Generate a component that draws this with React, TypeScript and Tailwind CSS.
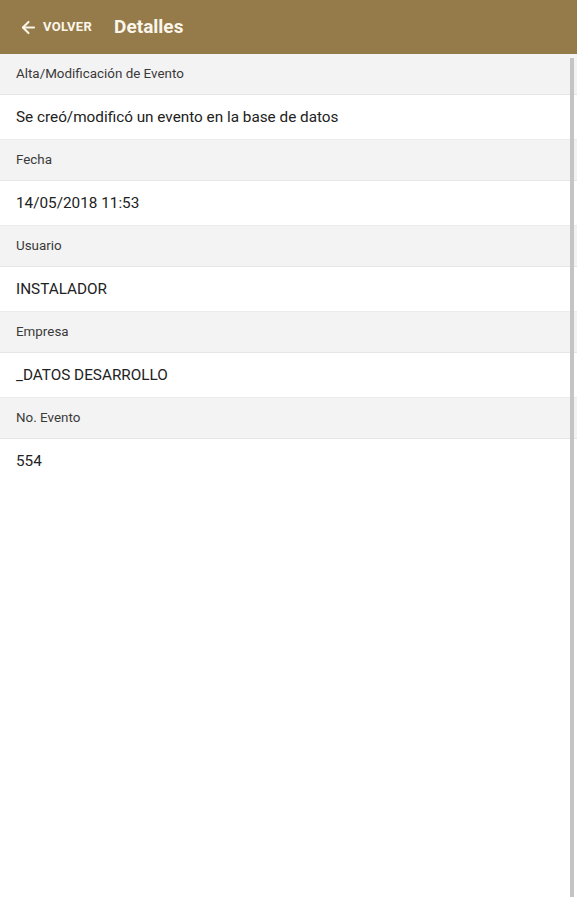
import { ArrowLeft } from "lucide-react";

const fields = [
  { label: "Alta/Modificación de Evento", value: "Se creó/modificó un evento en la base de datos" },
  { label: "Fecha", value: "14/05/2018 11:53" },
  { label: "Usuario", value: "INSTALADOR" },
  { label: "Empresa", value: "_DATOS DESARROLLO" },
  { label: "No. Evento", value: "554" },
];

export default function App() {
  return (
    <div className="relative h-[900px] w-[577px] overflow-hidden bg-white" style={{ fontFamily: "Roboto, 'Noto Sans', sans-serif" }}>
      {/* Toolbar */}
      <div className="flex h-[54px] items-center bg-[#957b4a] shadow-[0_1px_3px_rgba(0,0,0,0.3)]">
        <div className="ml-[19px] flex items-center text-[#fbf6ea]">
          <ArrowLeft size={19} strokeWidth={2.6} />
          <span className="ml-[5px] text-[13px] font-bold tracking-[0.3px]">VOLVER</span>
        </div>
        <span className="ml-[22px] text-[19px] font-bold text-[#fbf6ea]">Detalles</span>
      </div>

      {fields.map((f, i) => (
        <div key={f.label}>
          <div className="flex h-[41px] items-center border-b border-[#e6e6e6] bg-[#f3f3f3] px-4 text-[13.4px] text-[#3a3a3a]">
            {f.label}
          </div>
          <div
            className={`flex h-[45px] items-center bg-white px-4 text-[15.3px] text-[#222] ${
              i < fields.length - 1 ? "border-b border-[#ececec]" : ""
            }`}
          >
            {f.value}
          </div>
        </div>
      ))}

      {/* scrollbar */}
      <div className="absolute right-[3px] top-[58px] h-[839px] w-[4px] bg-[#c4c4c4]" />
    </div>
  );
}
